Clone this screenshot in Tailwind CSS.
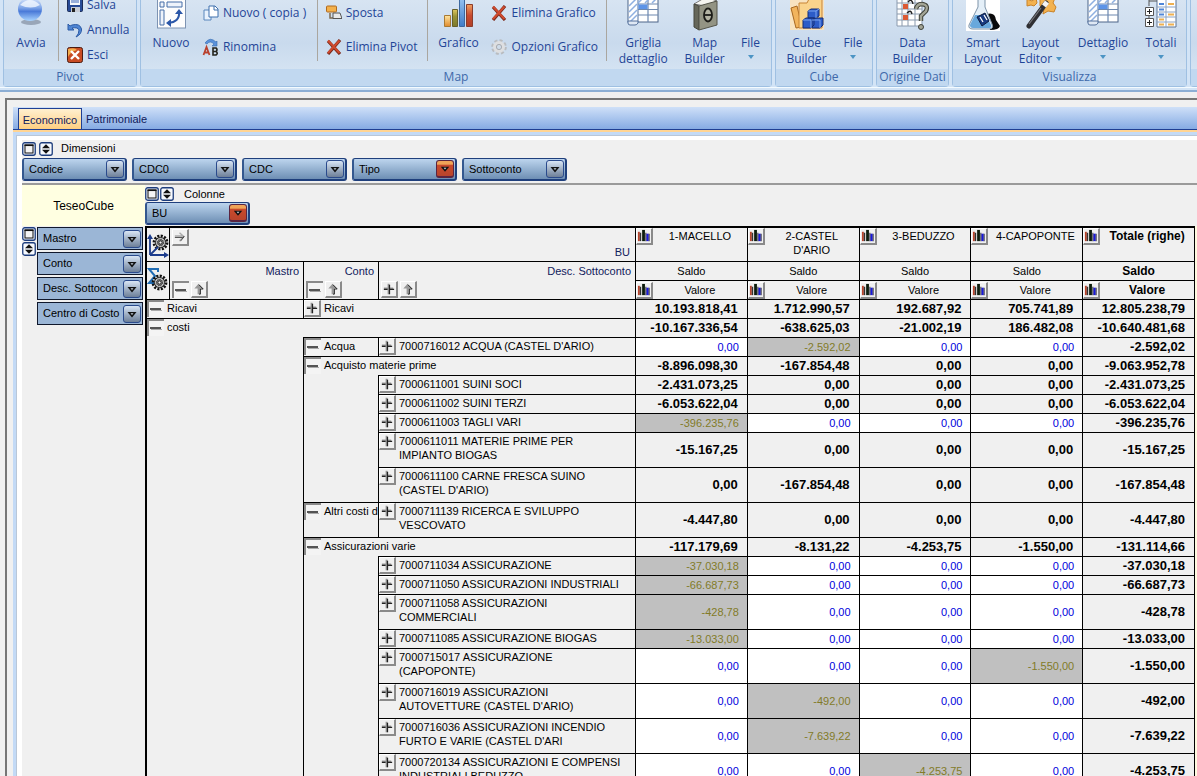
<!DOCTYPE html>
<html lang="it">
<head>
<meta charset="utf-8">
<title>TeseoCube</title>
<script src="https://cdn.jsdelivr.net/npm/@tailwindcss/browser@4"></script>
</head>
<body class="h-screen overflow-hidden bg-[#f0f0f0] flex flex-col font-['Liberation_Sans',Arial,sans-serif] text-[11px] text-black">

<svg class="absolute size-0" aria-hidden="true">
  <defs>
    <linearGradient id="orb" x1="0" y1="0" x2="0" y2="1"><stop offset="0" stop-color="#dfeafc"/><stop offset=".45" stop-color="#7fa5e8"/><stop offset=".6" stop-color="#4a7ad8"/><stop offset="1" stop-color="#a8d4ff"/></linearGradient>
    <linearGradient id="gold" x1="0" y1="0" x2="0" y2="1"><stop offset="0" stop-color="#ffe6a0"/><stop offset="1" stop-color="#e08a2c"/></linearGradient>
    <linearGradient id="olive" x1="0" y1="0" x2="0" y2="1"><stop offset="0" stop-color="#e0c860"/><stop offset=".4" stop-color="#9a9438"/><stop offset="1" stop-color="#7c7a2c"/></linearGradient>
    <linearGradient id="azure" x1="0" y1="0" x2="0" y2="1"><stop offset="0" stop-color="#9cc8f4"/><stop offset="1" stop-color="#3f7cc8"/></linearGradient>
    <linearGradient id="red" x1="0" y1="0" x2="0" y2="1"><stop offset="0" stop-color="#f0a060"/><stop offset=".5" stop-color="#c84a30"/><stop offset="1" stop-color="#b04028"/></linearGradient>
  </defs>
  <symbol id="i-cross" viewBox="0 0 16 16"><path d="M2 2 14 15M14 1 2 15" stroke="#7b2a1c" stroke-width="3.2" fill="none"/><path d="M2 1.500 13.500 14M13.500 1.500 2 14" stroke="#cf4a2e" stroke-width="2" fill="none"/></symbol>
  <symbol id="i-plus" viewBox="0 0 15 15"><path d="M2 7h10M7 2v11" stroke="#9a9a9a" stroke-width="2"/><path d="M2 8h4M8 8h5M8 3v10" stroke="#222" stroke-width="1.400" fill="none"/></symbol>
  <symbol id="i-minus" viewBox="0 0 15 15"><path d="M1 7h11" stroke="#111" stroke-width="1.400"/><path d="M2 8.500h11" stroke="#aaa" stroke-width="1"/></symbol>
  <symbol id="i-up" viewBox="0 0 15 15"><path d="M7 2 2.500 7H6v6h3V7h3z" fill="#999"/><path d="M7.500 3 12 7.500H9V13H7.500" stroke="#222" fill="none"/></symbol>
  <symbol id="i-right" viewBox="0 0 15 15"><path d="M2 6.500h8M7 3l4.500 4L7 11.500" stroke="#aaa" stroke-width="1.500" fill="none"/><path d="M2 8h8l2-1-4 5" stroke="#444" fill="none"/></symbol>
  <symbol id="i-bars" viewBox="0 0 15 15"><path d="M1 3h2v10H1z" fill="#b8442c"/><path d="M3 4h1.500v9H3z" fill="#333"/><path d="M5.500 1h3v12h-3z" fill="#0c1c0c"/><path d="M10 5h2.500v8H10z" fill="#1818e0"/><path d="M9 4h1v9H9zM12.500 5h1v8h-1z" fill="#223"/></symbol>
  <symbol id="i-drop" viewBox="0 0 16 16"><path d="M3.500 6h9L8 11.500z" fill="#111"/><path d="M6.500 7.300h3L8 9z" fill="#c9d4e0"/></symbol>
  <symbol id="i-box" viewBox="0 0 14 14"><rect x=".75" y=".75" width="12.500" height="12.500" rx="2" fill="#eef3fa" stroke="#1c3c7c" stroke-width="1.300"/><rect x="3" y="3" width="8" height="8" fill="#f4f4f4" stroke="#111" stroke-width="1"/><path d="M2.500 3.300h9" stroke="#111" stroke-width="1.500"/></symbol>
  <symbol id="i-spin" viewBox="0 0 14 14"><rect x=".75" y=".75" width="12.500" height="12.500" rx="2" fill="#f6f9fd" stroke="#1c3c7c" stroke-width="1.300"/><path d="M7 2.300 11 6.300H3zM7 11.700 11 7.700H3z" fill="#111"/></symbol>
  <symbol id="i-grid" viewBox="0 0 34 32"><rect x="2" y="-6" width="30" height="28" fill="#fff" stroke="#4c6488"/><path d="M12 -6v28M22 -6v28M12 4h20M12 9.500h20M12 15h20" stroke="#6c88b0" stroke-width="1.200"/><path d="M3 6l7-7M3 12l8-8M3 18l8-8M4 22l7-7M12 3l5-5M19 3l5-5M26 3l5-5" stroke="#8fb0e0" stroke-width="1.500"/><path d="M12.500 4.500h9v4.500h-9z" fill="#5c94e8"/><path d="M2 21h10v2q-1 2-3 2H4q-2 0-2-2z" fill="#dfe8f4" stroke="#54709c"/></symbol>
  <symbol id="i-gear" viewBox="0 0 22 22"><circle cx="11" cy="11" r="8.500" fill="none" stroke="#111" stroke-width="3.500" stroke-dasharray="2.700 1.750"/><circle cx="11" cy="11" r="6.500" fill="#c9c9c9" stroke="#111" stroke-width="1.200"/><circle cx="11" cy="11" r="4" fill="#777" stroke="#111" stroke-dasharray="2 1"/><circle cx="11" cy="11" r="2" fill="#f4f4f4" stroke="#111"/></symbol>
</svg>

<!-- Ribbon -->
<header class="shrink-0 bg-[#d3e4f6] border-b-2 border-[#8caed4] h-[92px] font-['Open_Sans','Noto_Sans',sans-serif] text-[12px] leading-4 text-[#1f4597]">
  <div class="flex h-[88px] pl-[3px] gap-[3px] border-b border-[#f4fbff]">
    <section class="flex flex-col w-[134px] shrink-0 rounded-b-sm border-x border-b border-[#9fc0e2] bg-linear-to-b from-[#d7e4f2] via-[#c9daed] to-[#dae8f5]" aria-label="Pivot">
      <div class="flex h-[69px]">
        <button class="flex flex-col items-center w-[54px]"><svg class="w-8 h-[35px]" viewBox="0 0 32 35"><ellipse cx="16" cy="22" rx="10" ry="3" fill="#8793a5" opacity=".75"/><circle cx="15" cy="9" r="12" fill="url(#orb)"/><path d="M5 5q10-10 20 0-9 5-20 0" fill="#f3f8ff" opacity=".8"/></svg>Avvia</button>
        <div class="w-px h-[61px] bg-[#aaa69f]"></div>
        <div class="-mt-2 ml-2 flex flex-col">
          <button class="flex h-[25px] items-center gap-1"><svg class="size-4" viewBox="0 0 16 16"><rect x=".5" y=".5" width="15" height="14" rx="1" fill="#274a96" stroke="#1b2c58"/><path d="M3 1h10v7H3z" fill="#f6f8fc"/><path d="M4 3h8M4 5h8" stroke="#3c66b8"/><path d="M4 10h9v5H4z" fill="#c7ccd6"/><path d="M5 11h3v4H5z" fill="#222"/></svg>Salva</button>
          <button class="flex h-[25px] items-center gap-1"><svg class="size-4" viewBox="0 0 16 16"><path d="M1 2v6h6L5 6q6-1 7 2 0 4-3 7 6-3 5.500-8Q13 1 5 3L3 4z" fill="#4f86d4" stroke="#2c5aa4"/></svg>Annulla</button>
          <button class="flex h-[25px] items-center gap-1"><svg class="size-4" viewBox="0 0 16 16"><rect x=".5" y=".5" width="15" height="15" rx="2" fill="#c84b24" stroke="#4c1c10"/><path d="M1 2q7-2 9 1-7 2-9 7z" fill="#f2ad4c"/><path d="M4 4l8 8M12 4l-8 8" stroke="#fff" stroke-width="2.400"/></svg>Esci</button>
        </div>
      </div>
      <div class="flex-1 bg-[#c1d8f0] text-center text-[#3e69aa]">Pivot</div>
    </section>

    <section class="flex flex-col w-[632px] shrink-0 rounded-b-sm border-x border-b border-[#9fc0e2] bg-linear-to-b from-[#d7e4f2] via-[#c9daed] to-[#dae8f5]" aria-label="Map">
      <div class="flex h-[69px]">
        <button class="flex flex-col items-center w-[60px]"><svg class="w-8 h-[35px]" viewBox="0 0 32 35"><rect x="2.500" y="-4" width="28" height="32" fill="#fdfdfd" stroke="#7d93b2"/><path d="M5 2h4v5H5zM12 2h15v5H12zM5 10h4v15H5z" fill="#eef3fb" stroke="#476fa8"/><path d="M24 12q1 10-11 11" fill="none" stroke="#2b57a8" stroke-width="2"/><path d="M20 14l4-5 4 5zM16 19l-5 4 5 4z" fill="#2b57a8"/></svg>Nuovo</button>
        <div class="-mt-1 ml-[2px] flex flex-col w-[114px]">
          <button class="flex h-[34px] items-center gap-1 whitespace-nowrap"><svg class="size-4" viewBox="0 0 16 16"><path d="M1 5h6l1 2v8H1z" fill="#e7f1fd" stroke="#5886bc"/><path d="M6 1h6l3 3v8H6z" fill="#fff" stroke="#3e70ae"/><path d="M11 1v4h4" fill="none" stroke="#3e70ae"/></svg>Nuovo ( copia )</button>
          <button class="flex h-[34px] items-center gap-1"><svg class="size-4 overflow-visible" viewBox="0 0 16 16"><path d="M2 4Q7-3 13 3l1-1v5h-5l2-2Q7 1 4 5z" fill="#5a92dc" stroke="#356cb0" stroke-width=".6"/><path d="M.5 16 3.500 8 6.500 16M1.500 13.500h4" fill="none" stroke="#b9402c" stroke-width="1.800"/><path d="M10 9v7h3q2.500-1.800 0-3.500Q15 10.500 13 9zM10 12.500h3" fill="none" stroke="#24241c" stroke-width="1.600"/></svg>Rinomina</button>
        </div>
        <div class="w-px h-[61px] bg-[#aaa69f]"></div>
        <div class="-mt-1 ml-2 flex flex-col w-[101px]">
          <button class="flex h-[34px] items-center gap-1"><svg class="size-4" viewBox="0 0 16 16"><rect x=".5" y="1" width="10" height="6" rx="1" fill="#f3b14c" stroke="#b06a20"/><path d="M4 8v5h3" stroke="#7c6a50" fill="none" stroke-width="1.500"/><path d="M7 8h7l2 5.500H7z" fill="#e9e9e9" stroke="#555"/></svg>Sposta</button>
          <button class="flex h-[34px] items-center gap-1 whitespace-nowrap"><svg class="size-4"><use href="#i-cross"/></svg>Elimina Pivot</button>
        </div>
        <div class="w-px h-[61px] bg-[#aaa69f]"></div>
        <button class="flex flex-col items-center w-[62px]"><svg class="w-8 h-[35px]" viewBox="0 0 32 35"><path d="M1.500 15.500h6v11h-6z" fill="url(#gold)" stroke="#a87a34"/><path d="M9.500 9.500h5v17h-5z" fill="url(#olive)" stroke="#66602c"/><path d="M16.500-4h5v30.500h-5z" fill="url(#azure)" stroke="#3c68a0"/><path d="M23.500 4.500h6v22h-6z" fill="url(#red)" stroke="#8a3c2c"/></svg>Grafico</button>
        <div class="-mt-1 ml-[2px] flex flex-col w-[115px]">
          <button class="flex h-[34px] items-center gap-1 whitespace-nowrap"><svg class="size-4"><use href="#i-cross"/></svg>Elimina Grafico</button>
          <button class="flex h-[34px] items-center gap-1 whitespace-nowrap"><svg class="size-4" viewBox="0 0 16 16"><circle cx="8" cy="8" r="6.300" fill="none" stroke="#b9bcc0" stroke-width="3" stroke-dasharray="2.900 2"/><circle cx="8" cy="8" r="4.300" fill="none" stroke="#dedfe1" stroke-width="3.400"/><circle cx="8" cy="8" r="2.600" fill="#cfdcea" stroke="#a8abb0"/></svg>Opzioni Grafico</button>
        </div>
        <div class="w-px h-[61px] bg-[#aaa69f]"></div>
        <button class="flex flex-col items-center w-[72px]"><svg class="w-[34px] h-[35px]" viewBox="0 0 34 35"><use href="#i-grid" width="34" height="32"/></svg>Griglia<br>dettaglio</button>
        <button class="flex flex-col items-center w-[51px]"><svg class="w-8 h-[35px]" viewBox="0 0 32 35"><path d="M5 4 17-3l11 4-12 5z" fill="#f5f5f0" stroke="#777"/><path d="M5 4l5 2v24l-5-3z" fill="#66675a" stroke="#45463c"/><path d="M10 6l18-5v24l-18 5z" fill="#939484" stroke="#54554a"/><ellipse cx="19" cy="15" rx="4" ry="6.500" fill="#b4b4a4" stroke="#1c1c18" stroke-width="1.800"/><path d="M15 15h8" stroke="#1c1c18" stroke-width="1.800"/></svg>Map<br>Builder</button>
        <button class="flex flex-col items-center w-[41px]"><span class="h-[35px]"></span>File<svg class="mt-1 w-[6px] h-[4px]" viewBox="0 0 6 4"><path d="M0 0h6L3 4z" fill="#4c94c4"/></svg></button>
      </div>
      <div class="flex-1 bg-[#c1d8f0] text-center text-[#3e69aa]">Map</div>
    </section>

    <section class="flex flex-col w-[98px] shrink-0 rounded-b-sm border-x border-b border-[#9fc0e2] bg-linear-to-b from-[#d7e4f2] via-[#c9daed] to-[#dae8f5]" aria-label="Cube">
      <div class="flex h-[69px]">
        <button class="flex flex-col items-center w-[61px]"><svg class="w-[34px] h-[35px]" viewBox="0 0 34 35"><path d="M0 0h34v30H0z" fill="#f8e3c0"/><path d="M1 8l6-2 5 21-6 1z" fill="#f2b45c" stroke="#a86820"/><path d="M9 3h8l2-4h13v29H9z" fill="#fad38c" stroke="#c88434"/><path d="M18 11l3-2h8v7l-3 2h-8zM13 20l3-2h8v7l-3 3h-8zM22 20l3-2h8v7l-3 3h-8z" fill="#2d5cc8" stroke="#142c74"/><path d="M18 11h8v7M26 11l3-2M13 20h8v8M22 20h8v8" fill="none" stroke="#7ca4f0"/></svg>Cube<br>Builder</button>
        <button class="flex flex-col items-center w-[32px]"><span class="h-[35px]"></span>File<svg class="mt-1 w-[6px] h-[4px]" viewBox="0 0 6 4"><path d="M0 0h6L3 4z" fill="#4c94c4"/></svg></button>
      </div>
      <div class="flex-1 bg-[#c1d8f0] text-center text-[#3e69aa]">Cube</div>
    </section>

    <section class="flex flex-col w-[73px] shrink-0 rounded-b-sm border-x border-b border-[#9fc0e2] bg-linear-to-b from-[#d7e4f2] via-[#c9daed] to-[#dae8f5]" aria-label="Origine Dati">
      <div class="flex h-[69px]">
        <button class="flex flex-col items-center w-full"><svg class="w-[34px] h-[35px]" viewBox="0 0 34 35"><path d="M1-2h25v28H1z" fill="#fff" stroke="#8a9aae"/><path d="M6-2v28M12-2v28M19-2v28M1 3h25M1 9h25M1 14h25M1 20h25" stroke="#8a9aae"/><path d="M7 4h5v5H7zM7 15h5v5H7z" fill="#dc5a34"/><path d="M12 2q4-4 5 2M11 13q4-4 5 1" fill="none" stroke="#222" stroke-width="1.400"/><path d="M20 9q1-5 6-5 7 1 4 7l-5 5v5" fill="none" stroke="#3e4038" stroke-width="4.400"/><path d="M20 9q1-5 6-5 7 1 4 7l-5 5v5" fill="none" stroke="#a3a596" stroke-width="2.400"/><circle cx="25" cy="27" r="2.500" fill="#a3a596" stroke="#3e4038"/></svg>Data<br>Builder</button>
      </div>
      <div class="flex-1 bg-[#c1d8f0] text-center text-[#3e69aa] whitespace-nowrap">Origine Dati</div>
    </section>

    <section class="flex flex-col w-[235px] shrink-0 rounded-b-sm border-x border-b border-[#9fc0e2] bg-linear-to-b from-[#d7e4f2] via-[#c9daed] to-[#dae8f5]" aria-label="Visualizza">
      <div class="flex h-[69px]">
        <button class="flex flex-col items-center w-[60px]"><svg class="w-[34px] h-[35px]" viewBox="0 0 34 35"><path d="M0 0h34v31H0z" fill="#fff"/><path d="M21 14q8-2 9 6l4 6q-1 4-10 4z" fill="#0a0a0a"/><path d="M12-2v9L3 25q-1 4 4 4h16q5 0 3-5L19 7v-9z" fill="#e4eff8" stroke="#7d93a8"/><path d="M9 15 4 25q0 3 3 3h16q3 0 2-3l-5-10z" fill="#68a8dc"/><path d="M11 17l8-4 4 8-7 5z" fill="#173a80" stroke="#0b1c40"/><path d="M14 17l3 5M18 15l3 5" stroke="#fff" stroke-width="1.300"/></svg>Smart<br>Layout</button>
        <button class="flex flex-col items-center w-[55px]"><svg class="w-8 h-[35px]" viewBox="0 0 32 35"><path d="M2-1l5 2 4-3 1 5-3 3-3-1-4 1zM15-2h15l-2 5 3 4-2 5-6-1-5 3 1-5-4-3z" fill="#f3b250" stroke="#c98228"/><path d="M21 3 4 26" stroke="#2f2f33" stroke-width="5" stroke-linecap="round"/><path d="M22 2l-3 4" stroke="#f4f4f4" stroke-width="5"/><path d="M16 8 4 24" stroke="#77777c" stroke-width="1.200"/></svg>Layout<span class="flex items-center gap-1">Editor<svg class="w-[6px] h-[4px]" viewBox="0 0 6 4"><path d="M0 0h6L3 4z" fill="#4c94c4"/></svg></span></button>
        <button class="flex flex-col items-center w-[70px]"><svg class="w-[34px] h-[35px]" viewBox="0 0 34 35"><use href="#i-grid" width="34" height="32"/></svg>Dettaglio<svg class="mt-1 w-[6px] h-[4px]" viewBox="0 0 6 4"><path d="M0 0h6L3 4z" fill="#4c94c4"/></svg></button>
        <button class="flex flex-col items-center w-[46px]"><svg class="w-8 h-[35px]" viewBox="0 0 32 35"><path d="M12-2h19v29H12z" fill="#fff" stroke="#5c7494"/><path d="M12 7h19M12 12h19M12 17h19M12 22h19M21-2v29" stroke="#8ca4c4"/><path d="M14 4h5M14 9.500h5M14 14.500h5" stroke="#4f86d8" stroke-width="2"/><path d="M23 4h6M23 14.500h6M14 19.500h5M23 24.500h6M14 24.500h5" stroke="#eeb050" stroke-width="2"/><path d="M4-2v8M4 1h8M4 16v4" stroke="#555"/><path d="M.5 7.500h8v8h-8zM.5 18.500h8v8h-8z" fill="#fff" stroke="#555"/><path d="M2 11.500h5M4.500 9v5M2 22.500h5M4.500 20v5" stroke="#222"/></svg>Totali<svg class="mt-1 w-[6px] h-[4px]" viewBox="0 0 6 4"><path d="M0 0h6L3 4z" fill="#4c94c4"/></svg></button>
      </div>
      <div class="flex-1 bg-[#c1d8f0] text-center text-[#3e69aa]">Visualizza</div>
    </section>
    <section class="flex flex-col flex-1 rounded-bl-sm border-l border-b border-[#9fc0e2] bg-linear-to-b from-[#d7e4f2] via-[#c9daed] to-[#dae8f5]"><div class="h-[69px]"></div><div class="flex-1 bg-[#c1d8f0]"></div></section>
  </div>
</header>

<!-- Document frame -->
<main class="mt-[6px] ml-[5px] flex-1 min-h-0 border-t-2 border-l-2 border-[#767676] pt-[7px] pl-[6px] flex flex-col">
  <nav class="shrink-0 flex items-end h-[23px] pl-[5px] bg-linear-to-b from-[#cfe0f8] to-[#86abe3] border-b border-[#1f3f93]">
    <button class="h-[21px] w-[64px] pt-[2px] border border-b-0 border-[#1f3f93] bg-linear-to-b from-[#fff0d0] to-[#ffcf80] text-[#10205c]">Economico</button>
    <button class="h-[21px] px-1 pt-[2px] text-[#10205c]">Patrimoniale</button>
  </nav>
  <div class="shrink-0 h-[2px] bg-[#ffd493]"></div>
  <div class="flex-1 min-h-0 flex flex-col bg-[#c3daf6] pl-[3px] pt-[3px]">
    <div class="flex-1 min-h-0 flex flex-col bg-white border-t border-l border-[#b9c7d8] pt-[4px] pl-[5px]">
      <div class="flex-1 min-h-0 flex flex-col bg-[#f0f0f0]">

        <div class="shrink-0 flex items-center h-[17px] gap-[3px]">
          <button aria-label="Riquadro dimensioni"><svg class="size-[14px] block"><use href="#i-box"/></svg></button>
          <button aria-label="Ordina dimensioni"><svg class="size-[14px] block"><use href="#i-spin"/></svg></button>
          <span class="ml-[5px]">Dimensioni</span>
        </div>
        <div id="dims" class="shrink-0 flex h-[28px] gap-[5px] pt-px items-start border-b-2 border-[#9a9a9a]"></div>

        <div class="shrink-0 flex h-[41px]">
          <div class="w-[123px] grid place-items-center bg-[#ffffe1] text-[12px]">TeseoCube</div>
          <div class="flex-1 pt-px">
            <div class="flex items-center h-[15px] gap-px">
              <button aria-label="Riquadro colonne"><svg class="size-[14px] block"><use href="#i-box"/></svg></button>
              <button aria-label="Ordina colonne"><svg class="size-[14px] block"><use href="#i-spin"/></svg></button>
              <span class="ml-[9px] pt-px">Colonne</span>
            </div>
            <div id="cols" class="flex pt-px"></div>
          </div>
        </div>

        <div class="flex-1 min-h-0 flex overflow-hidden">
          <aside class="w-[123px] shrink-0 flex gap-px pt-px">
            <div class="flex flex-col gap-px">
              <button aria-label="Riquadro righe"><svg class="size-[14px] block"><use href="#i-box"/></svg></button>
              <button aria-label="Ordina righe"><svg class="size-[14px] block"><use href="#i-spin"/></svg></button>
            </div>
            <div id="rows" class="flex flex-col gap-[2px]"></div>
          </aside>
          <div class="flex-1 min-w-0 bg-[#fffbe0] pr-[2px] self-start">
            <table class="w-full table-fixed border-separate border-spacing-0 border-t border-l border-r border-black bg-[#f0f0f0]">
              <colgroup><col class="w-[23px]"><col class="w-[134px]"><col class="w-[75px]"><col class="w-[257px]"><col><col><col><col><col></colgroup>
              <thead id="head"></thead>
              <tbody id="body"></tbody>
            </table>
          </div>
        </div>
      </div>
    </div>
  </div>
</main>

<script>
const icon = id => `<svg class="size-full block"><use href="#${id}"/></svg>`;
const raised = (id, label) => `<button aria-label="${label}" class="size-[17px] shrink-0 bg-[#f0f0f0] border-t border-l border-b-2 border-r-2 border-t-white border-l-white border-b-[#8a8a8a] border-r-[#8a8a8a]">${icon(id)}</button>`;
const sunken = (id, label) => `<button aria-label="${label}" class="size-[17px] shrink-0 bg-[#f4f4f4] border-t-2 border-l-2 border-[#8a8a8a]">${icon(id)}</button>`;
const plus = raised('i-plus', 'Espandi'), minus = sunken('i-minus', 'Comprimi'), up = raised('i-up', 'Ordina'), bars = raised('i-bars', 'Grafico');

const arrow = hot => hot
  ? `<span class="size-[18px] shrink-0 rounded-[3px] border border-b-2 border-[#5b2440] bg-linear-to-b from-[#f0a458] from-20% via-[#c84a2c] via-30% to-[#b8442c]">${icon('i-drop')}</span>`
  : `<span class="size-[18px] shrink-0 rounded-[3px] border border-[#2a4a8c] bg-linear-to-b from-[#d9e6f5] to-[#6d7f98]">${icon('i-drop')}</span>`;
const chip = (text, hot) => `<button class="flex items-center justify-between w-[105px] h-[23px] pl-[5px] pr-px rounded-[3px] border-2 border-t border-[#1f3f7c] border-l-[#34588f] bg-linear-to-b from-[#bdd5ee] to-[#6e8fb4] whitespace-nowrap overflow-hidden"><span>${text}</span>${arrow(hot)}</button>`;
const flat = text => `<button class="flex items-center w-[106px] h-[23px] pl-[5px] pr-px border border-[#10182c] bg-[#9bb6d6] text-left"><span class="flex-1 min-w-0 whitespace-nowrap">${text}</span>${arrow(false)}</button>`;
dims.innerHTML = chip('Codice') + chip('CDC0') + chip('CDC') + chip('Tipo', true) + chip('Sottoconto');
cols.innerHTML = chip('BU', true);
rows.innerHTML = ['Mastro', 'Conto', 'Desc. Sottocon', 'Centro di Costo'].map(flat).join('');

const names = ['1-MACELLO', "2-CASTEL D'ARIO", '3-BEDUZZO', '4-CAPOPONTE', 'Totale (righe)'];
const weight = i => i === 4 ? 'font-bold text-[12px]' : 'font-normal';
const axis = (label, btns) => `<th rowspan="2" class="border-t border-l border-black p-0 font-normal align-top"><div class="h-[37px] flex flex-col justify-between"><span class="text-right pr-1 pt-px text-[#10205c]">${label}</span><span class="flex gap-[2px] pl-[2px] pb-px">${btns}</span></div></th>`;
head.innerHTML = `
<tr class="h-[34px]"><th class="border-t border-l border-black p-0 align-middle"><button aria-label="Assi" class="block w-[22px] h-[30px]"><svg class="w-[22px] h-[30px]" viewBox="0 0 22 30"><use href="#i-gear" x="5" y="4" width="17" height="17"/><path d="M3 25V7M3 25h16M3 25l8-8" stroke="#1c3c8c" stroke-width="1.800" fill="none"/><path d="M0 9l3-5 3 5zM17 22l5 3-5 3z" fill="#1c3c8c"/></svg></button></th>
<th colspan="3" class="border-t border-l border-black p-0 font-normal"><div class="h-[33px] flex justify-between pl-[2px] pt-px">${raised('i-right', 'Sposta')}<span class="self-end pb-px pr-[5px] text-[#10205c]">BU</span></div></th>
${names.map((n, i) => `<th class="border-t border-l border-black p-0 ${weight(i)}"><div class="h-[33px] flex">${bars}<span class="flex-1 pt-px leading-[14px] ${i === 1 ? 'px-4' : ''}">${n}</span></div></th>`).join('')}</tr>
<tr class="h-[19px]"><th rowspan="2" class="border-t border-l border-black p-0"><button aria-label="Totali" class="block w-[22px] h-[30px]"><svg class="w-[22px] h-[30px]" viewBox="0 0 22 30"><path d="M11 6V3H2l6 7-6 7h5" stroke="#1f6cb4" stroke-width="2" fill="none"/><use href="#i-gear" x="4" y="8" width="17" height="17"/></svg></button></th>
${axis('Mastro', minus + up)}${axis('Conto', minus + up)}${axis('Desc. Sottoconto', plus + up)}
${names.map((n, i) => `<th class="border-t border-l border-black p-0 ${weight(i)}">Saldo</th>`).join('')}</tr>
<tr class="h-[19px]">${names.map((n, i) => `<th class="border-t border-l border-black p-0 ${weight(i)}"><div class="h-[18px] flex items-center">${bars}<span class="flex-1">Valore</span></div></th>`).join('')}</tr>`;

const val = v => {
  if (v[0] === 'b') return `<td class="border-t border-l border-black p-0 pr-[9px] text-right text-[13px] leading-4 font-bold">${v.slice(1)}</td>`;
  if (v[0] === 'g') return `<td class="border-t border-l border-black p-0 pr-[8px] text-right bg-[#c0c0c0] text-[#827b28]">${v.slice(1)}</td>`;
  return `<td class="border-t border-l border-black p-0 pr-[8px] text-right bg-white text-[#0000dc]">${v}</td>`;
};
const label = (btn, text, span) => `<td colspan="${span}" class="border-t border-l border-black p-0 align-top"><div class="flex">${btn}<span class="pl-[3px] pt-px leading-[14px] whitespace-nowrap">${text}</span></div></td>`;
const gap = (span, rows) => `<td colspan="${span}" rowspan="${rows}" class="border-l border-black p-0"></td>`;
const row = (cells, vals, tall) => `<tr class="${tall ? 'h-[35px]' : 'h-[19px]'}">${cells}${vals.split(' ').map(val).join('')}</tr>`;
const leaf = (text, vals) => row(label(plus, text, 1), vals, text.includes('<br>'));

body.innerHTML =
  row(label(minus, 'Ricavi', 2) + label(plus, 'Ricavi', 2), 'b10.193.818,41 b1.712.990,57 b192.687,92 b705.741,89 b12.805.238,79') +
  row(label(minus, 'costi', 4), 'b-10.167.336,54 b-638.625,03 b-21.002,19 b186.482,08 b-10.640.481,68') +
  row(gap(2, 17) + label(minus, 'Acqua', 1) + label(plus, "7000716012 ACQUA (CASTEL D'ARIO)", 1), '0,00 g-2.592,02 0,00 0,00 b-2.592,02') +
  row(label(minus, 'Acquisto materie prime', 2), 'b-8.896.098,30 b-167.854,48 b0,00 b0,00 b-9.063.952,78') +
  row(gap(1, 5) + label(plus, '7000611001 SUINI SOCI', 1), 'b-2.431.073,25 b0,00 b0,00 b0,00 b-2.431.073,25') +
  leaf('7000611002 SUINI TERZI', 'b-6.053.622,04 b0,00 b0,00 b0,00 b-6.053.622,04') +
  leaf('7000611003 TAGLI VARI', 'g-396.235,76 0,00 0,00 0,00 b-396.235,76') +
  leaf('7000611011 MATERIE PRIME PER<br>IMPIANTO BIOGAS', 'b-15.167,25 b0,00 b0,00 b0,00 b-15.167,25') +
  leaf("7000611100 CARNE FRESCA SUINO<br>(CASTEL D'ARIO)", 'b0,00 b-167.854,48 b0,00 b0,00 b-167.854,48') +
  row(label(minus, 'Altri costi d', 1) + label(plus, '7000711139 RICERCA E SVILUPPO<br>VESCOVATO', 1), 'b-4.447,80 b0,00 b0,00 b0,00 b-4.447,80', true) +
  row(label(minus, 'Assicurazioni varie', 2), 'b-117.179,69 b-8.131,22 b-4.253,75 b-1.550,00 b-131.114,66') +
  row(gap(1, 8) + label(plus, '7000711034 ASSICURAZIONE', 1), 'g-37.030,18 0,00 0,00 0,00 b-37.030,18') +
  leaf('7000711050 ASSICURAZIONI INDUSTRIALI', 'g-66.687,73 0,00 0,00 0,00 b-66.687,73') +
  leaf('7000711058 ASSICURAZIONI<br>COMMERCIALI', 'g-428,78 0,00 0,00 0,00 b-428,78') +
  leaf('7000711085 ASSICURAZIONE BIOGAS', 'g-13.033,00 0,00 0,00 0,00 b-13.033,00') +
  leaf('7000715017 ASSICURAZIONE<br>(CAPOPONTE)', '0,00 0,00 0,00 g-1.550,00 b-1.550,00') +
  leaf("7000716019 ASSICURAZIONI<br>AUTOVETTURE (CASTEL D'ARIO)", '0,00 g-492,00 0,00 0,00 b-492,00') +
  leaf("7000716036 ASSICURAZIONI INCENDIO<br>FURTO E VARIE (CASTEL D'ARI", '0,00 g-7.639,22 0,00 0,00 b-7.639,22') +
  leaf('7000720134 ASSICURAZIONI E COMPENSI<br>INDUSTRIALI BEDUZZO', '0,00 0,00 g-4.253,75 0,00 b-4.253,75');
</script>
</body>
</html>
